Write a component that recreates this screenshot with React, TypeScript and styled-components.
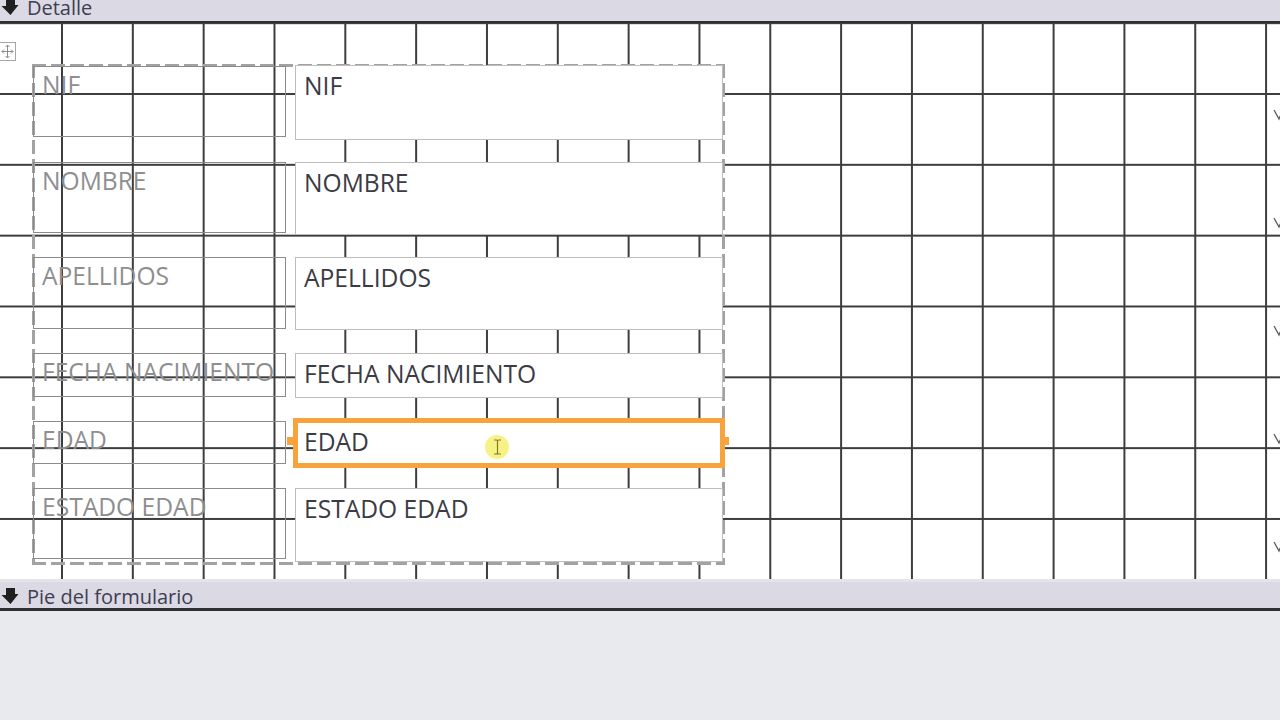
import React from 'react'
import styled, { createGlobalStyle } from 'styled-components'

type Field = {
  name: string
  labelTop: number
  labelHeight: number
  boxTop: number
  boxHeight: number
  selected?: boolean
}

// control geometry inside the Detalle section, in px from its top-left
const fields: Field[] = [
  { name: 'NIF', labelTop: 43, labelHeight: 71, boxTop: 42, boxHeight: 75 },
  { name: 'NOMBRE', labelTop: 139, labelHeight: 71, boxTop: 139, boxHeight: 73 },
  { name: 'APELLIDOS', labelTop: 234, labelHeight: 72, boxTop: 234, boxHeight: 73 },
  { name: 'FECHA NACIMIENTO', labelTop: 330, labelHeight: 44, boxTop: 330, boxHeight: 45 },
  { name: 'EDAD', labelTop: 398, labelHeight: 43, boxTop: 395, boxHeight: 50, selected: true },
  { name: 'ESTADO EDAD', labelTop: 465, labelHeight: 71, boxTop: 465, boxHeight: 74 },
]

const edgeMarks = [86, 194, 302, 410, 518]

const GlobalStyle = createGlobalStyle`
  html, body {
    margin: 0;
    padding: 0;
    height: 100%;
    background: #e8eaee;
    overflow: hidden;
  }
  body {
    font-family: "Open Sans", "DejaVu Sans", sans-serif;
  }
`

const SectionIcon = () => (
  <svg width="18" height="18" viewBox="0 0 18 18">
    <path d="M5 1 L14 1 L14 7 L17.5 7 L9.5 17 L0.5 8 L5 8 Z" fill="#202020" />
  </svg>
)

const MoveIcon = () => (
  <svg width="13" height="15" viewBox="0 0 13 15" fill="none" stroke="#8c8c8c" strokeWidth="1">
    <path d="M6.5 1 V14 M1 7.5 H12" />
    <path d="M4.5 3 L6.5 1 L8.5 3 M4.5 12 L6.5 14 L8.5 12 M3 5.5 L1 7.5 L3 9.5 M10 5.5 L12 7.5 L10 9.5" />
  </svg>
)

const IBeam = () => (
  <svg width="9" height="16" viewBox="0 0 9 16" fill="none" stroke="#857a2c" strokeWidth="1.2">
    <path d="M1 1 H3.5 Q4.5 1 4.5 2 V14 Q4.5 15 3.5 15 H1 M8 1 H5.5 Q4.5 1 4.5 2 M8 15 H5.5 Q4.5 15 4.5 14" />
  </svg>
)

const ChevronMark = () => (
  <svg width="8" height="12" viewBox="0 0 8 12" fill="none" stroke="#5a5a5a" strokeWidth="1.3">
    <path d="M1 1 L6 10 L9 3" />
  </svg>
)

export default function App() {
  return (
    <Page>
      <GlobalStyle />
      <SectionBar $height={23} $padBottom={3} $border={2}>
        <SectionIcon />
        <SectionTitle>Detalle</SectionTitle>
      </SectionBar>

      <Canvas>
        <MoveHandle>
          <MoveIcon />
        </MoveHandle>

        <LayoutGroup />

        {fields.map(f => (
          <React.Fragment key={f.name}>
            <Label $top={f.labelTop} $height={f.labelHeight}>
              {f.name}
            </Label>
            <TextBox $top={f.boxTop} $height={f.boxHeight} $selected={f.selected}>
              {f.name}
              {f.selected && (
                <>
                  <Grip $side="left" />
                  <Grip $side="right" />
                  <Pointer>
                    <IBeam />
                  </Pointer>
                </>
              )}
            </TextBox>
          </React.Fragment>
        ))}

        {edgeMarks.map(y => (
          <EdgeMark key={y} $top={y}>
            <ChevronMark />
          </EdgeMark>
        ))}
      </Canvas>

      <SectionBar $height={29} $padBottom={1} $border={3}>
        <SectionIcon />
        <SectionTitle>Pie del formulario</SectionTitle>
      </SectionBar>

      <FooterArea />
    </Page>
  )
}

const Page = styled.div`
  display: flex;
  flex-direction: column;
  width: 1280px;
  height: 720px;
  overflow: hidden;
`

const SectionBar = styled.div<{ $height: number; $padBottom: number; $border: number }>`
  box-sizing: border-box;
  flex: none;
  display: flex;
  align-items: flex-end;
  gap: 8px;
  height: ${p => p.$height}px;
  padding: 0 0 ${p => p.$padBottom}px 1px;
  background: #dbd9e3;
  border-bottom: ${p => p.$border}px solid #2f2f33;
  overflow: hidden;

  svg {
    flex: none;
    margin-bottom: 2px;
  }
`

const SectionTitle = styled.span`
  font-size: 20px;
  line-height: 20px;
  color: #3e3e52;
  white-space: nowrap;
`

const Canvas = styled.div`
  position: relative;
  flex: none;
  height: 556px;
  background-color: #fff;
  background-image: linear-gradient(to right, #3d3d3d 2px, transparent 2px),
    linear-gradient(to bottom, #3d3d3d 2px, transparent 2px);
  background-size: 70.83px 70.83px;
  background-position: -9.83px -0.83px;
  border-bottom: 3px solid #e5e4ea;
  overflow: hidden;
`

const MoveHandle = styled.div`
  position: absolute;
  left: -1px;
  top: 19px;
  width: 17px;
  height: 19px;
  box-sizing: border-box;
  display: flex;
  align-items: center;
  justify-content: center;
  background: #fff;
  border: 1px solid #a6a6a6;
`

// dashed outline of the stacked layout, drawn as long dashes on each side
const LayoutGroup = styled.div`
  position: absolute;
  left: 32px;
  top: 41px;
  width: 693px;
  height: 501px;
  background-image: repeating-linear-gradient(to right, #a2a2a2 0 14px, transparent 14px 19px),
    repeating-linear-gradient(to right, #a2a2a2 0 14px, transparent 14px 19px),
    repeating-linear-gradient(to bottom, #a2a2a2 0 14px, transparent 14px 19px),
    repeating-linear-gradient(to bottom, #a2a2a2 0 14px, transparent 14px 19px);
  background-size: 100% 3px, 100% 3px, 3px 100%, 3px 100%;
  background-position: 0 0, 0 100%, 0 0, 100% 0;
  background-repeat: no-repeat;
`

const Label = styled.div<{ $top: number; $height: number }>`
  position: absolute;
  left: 33px;
  top: ${p => p.$top}px;
  width: 253px;
  height: ${p => p.$height}px;
  box-sizing: border-box;
  padding: 1px 0 0 8px;
  border: 1px solid #8b8b8b;
  font-size: 24.6px;
  line-height: 33px;
  color: #8e8e90;
  white-space: nowrap;
  overflow: hidden;
`

const TextBox = styled.div<{ $top: number; $height: number; $selected?: boolean }>`
  position: absolute;
  left: ${p => (p.$selected ? 293 : 295)}px;
  top: ${p => p.$top}px;
  width: ${p => (p.$selected ? 432 : 428)}px;
  height: ${p => p.$height}px;
  box-sizing: border-box;
  padding: ${p => (p.$selected ? '2px 0 0 6px' : '3px 0 0 8px')};
  background: #fff;
  border: ${p => (p.$selected ? '5px solid #f8a33b' : '1px solid #bdbdbd')};
  font-size: 24.6px;
  line-height: 33px;
  color: #3b3b44;
  white-space: nowrap;
`

const Grip = styled.span<{ $side: 'left' | 'right' }>`
  position: absolute;
  top: 14px;
  ${p => (p.$side === 'left' ? 'left: -11px;' : 'right: -9px;')}
  width: 6px;
  height: 8px;
  background: #f8a33b;
`

const Pointer = styled.span`
  position: absolute;
  left: 187px;
  top: 12px;
  width: 24px;
  height: 24px;
  border-radius: 50%;
  background: rgba(244, 238, 92, 0.75);
  display: flex;
  align-items: center;
  justify-content: center;
`

const EdgeMark = styled.span<{ $top: number }>`
  position: absolute;
  left: 1273px;
  top: ${p => p.$top}px;
  line-height: 0;
`

const FooterArea = styled.div`
  flex: 1;
  background: #e8eaee;
`
